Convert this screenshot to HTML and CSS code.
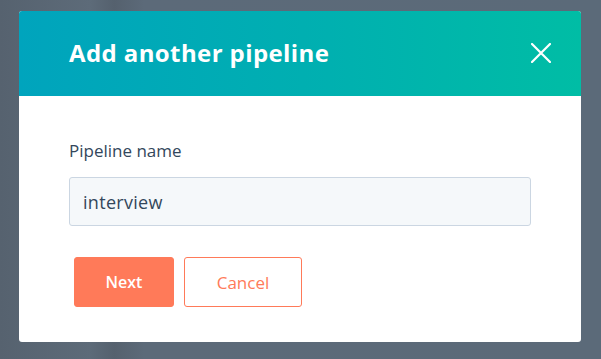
FILE: index.html
```html
<!DOCTYPE html>
<html lang="en">
<head>
    <meta charset="UTF-8">
    <title>Add another pipeline</title>
    <link rel="stylesheet" href="styles.css">
</head>
<body>
    <div class="modal">
        <div class="modal-header">
            <h1>Add another pipeline</h1>
            <button class="close" aria-label="Close">
                <svg width="20" height="20" viewBox="0 0 20 20">
                    <path d="M1 1 L19 19 M19 1 L1 19" stroke="#fff" stroke-width="2.2" stroke-linecap="round" fill="none"/>
                </svg>
            </button>
        </div>
        <div class="modal-body">
            <label for="pipelineName">Pipeline name</label>
            <input type="text" id="pipelineName" value="interview">
            <div class="actions">
                <button class="btn btn-primary">Next</button>
                <button class="btn btn-secondary">Cancel</button>
            </div>
        </div>
    </div>
</body>
</html>
```

FILE: styles.css
```css
body {
    margin: 0;
    height: 359px;
    overflow: hidden;
    font-family: "Open Sans", Lato, sans-serif;
    background: linear-gradient(90deg, #56626f 0%, #5d6b79 15%, #55616e 19%, #5c6a79 24%, #5b6a79 100%);
    padding: 11px 20px 0 19px;
    box-sizing: border-box;
}

.modal {
    background: #fff;
    border-radius: 3px;
    overflow: hidden;
    width: 562px;
    height: 331px;
}

.modal-header {
    height: 85px;
    background: linear-gradient(90deg, #00a4bd 0%, #00b0b0 55%, #00bda5 100%);
    display: flex;
    align-items: center;
    justify-content: space-between;
    padding: 0 30px 0 50px;
}

.modal-header h1 {
    margin: 0;
    color: #fff;
    font-size: 24px;
    font-weight: 700;
    letter-spacing: 0.4px;
    padding-bottom: 2px;
}

.close {
    background: none;
    border: none;
    padding: 0;
    width: 20px;
    height: 20px;
    cursor: pointer;
    margin-bottom: 2px;
}

.modal-body {
    padding: 43px 50px 0 50px;
}

label {
    display: block;
    color: #33475b;
    font-size: 17px;
    line-height: 23px;
    margin-bottom: 15px;
}

input {
    display: block;
    box-sizing: border-box;
    width: 462px;
    height: 49px;
    background: #f5f8fa;
    border: 1px solid #cbd6e2;
    border-radius: 3px;
    padding: 0 13px;
    font-family: "Open Sans", Lato, sans-serif;
    font-size: 18px;
    letter-spacing: 0.3px;
    color: #33475b;
}

.actions {
    display: flex;
    gap: 10px;
    margin-top: 31px;
    padding-left: 5px;
}

.btn {
    height: 50px;
    border-radius: 3px;
    font-family: "Open Sans", Lato, sans-serif;
    font-size: 16px;
    font-weight: 600;
    cursor: pointer;
}

.btn-primary {
    width: 100px;
    background: #ff7a59;
    border: 1px solid #ff7a59;
    color: #fff;
}

.btn-secondary {
    width: 118px;
    background: #fff;
    border: 1px solid #ff7a59;
    color: #ff7a59;
    font-size: 17px;
    font-weight: 400;
}
```
